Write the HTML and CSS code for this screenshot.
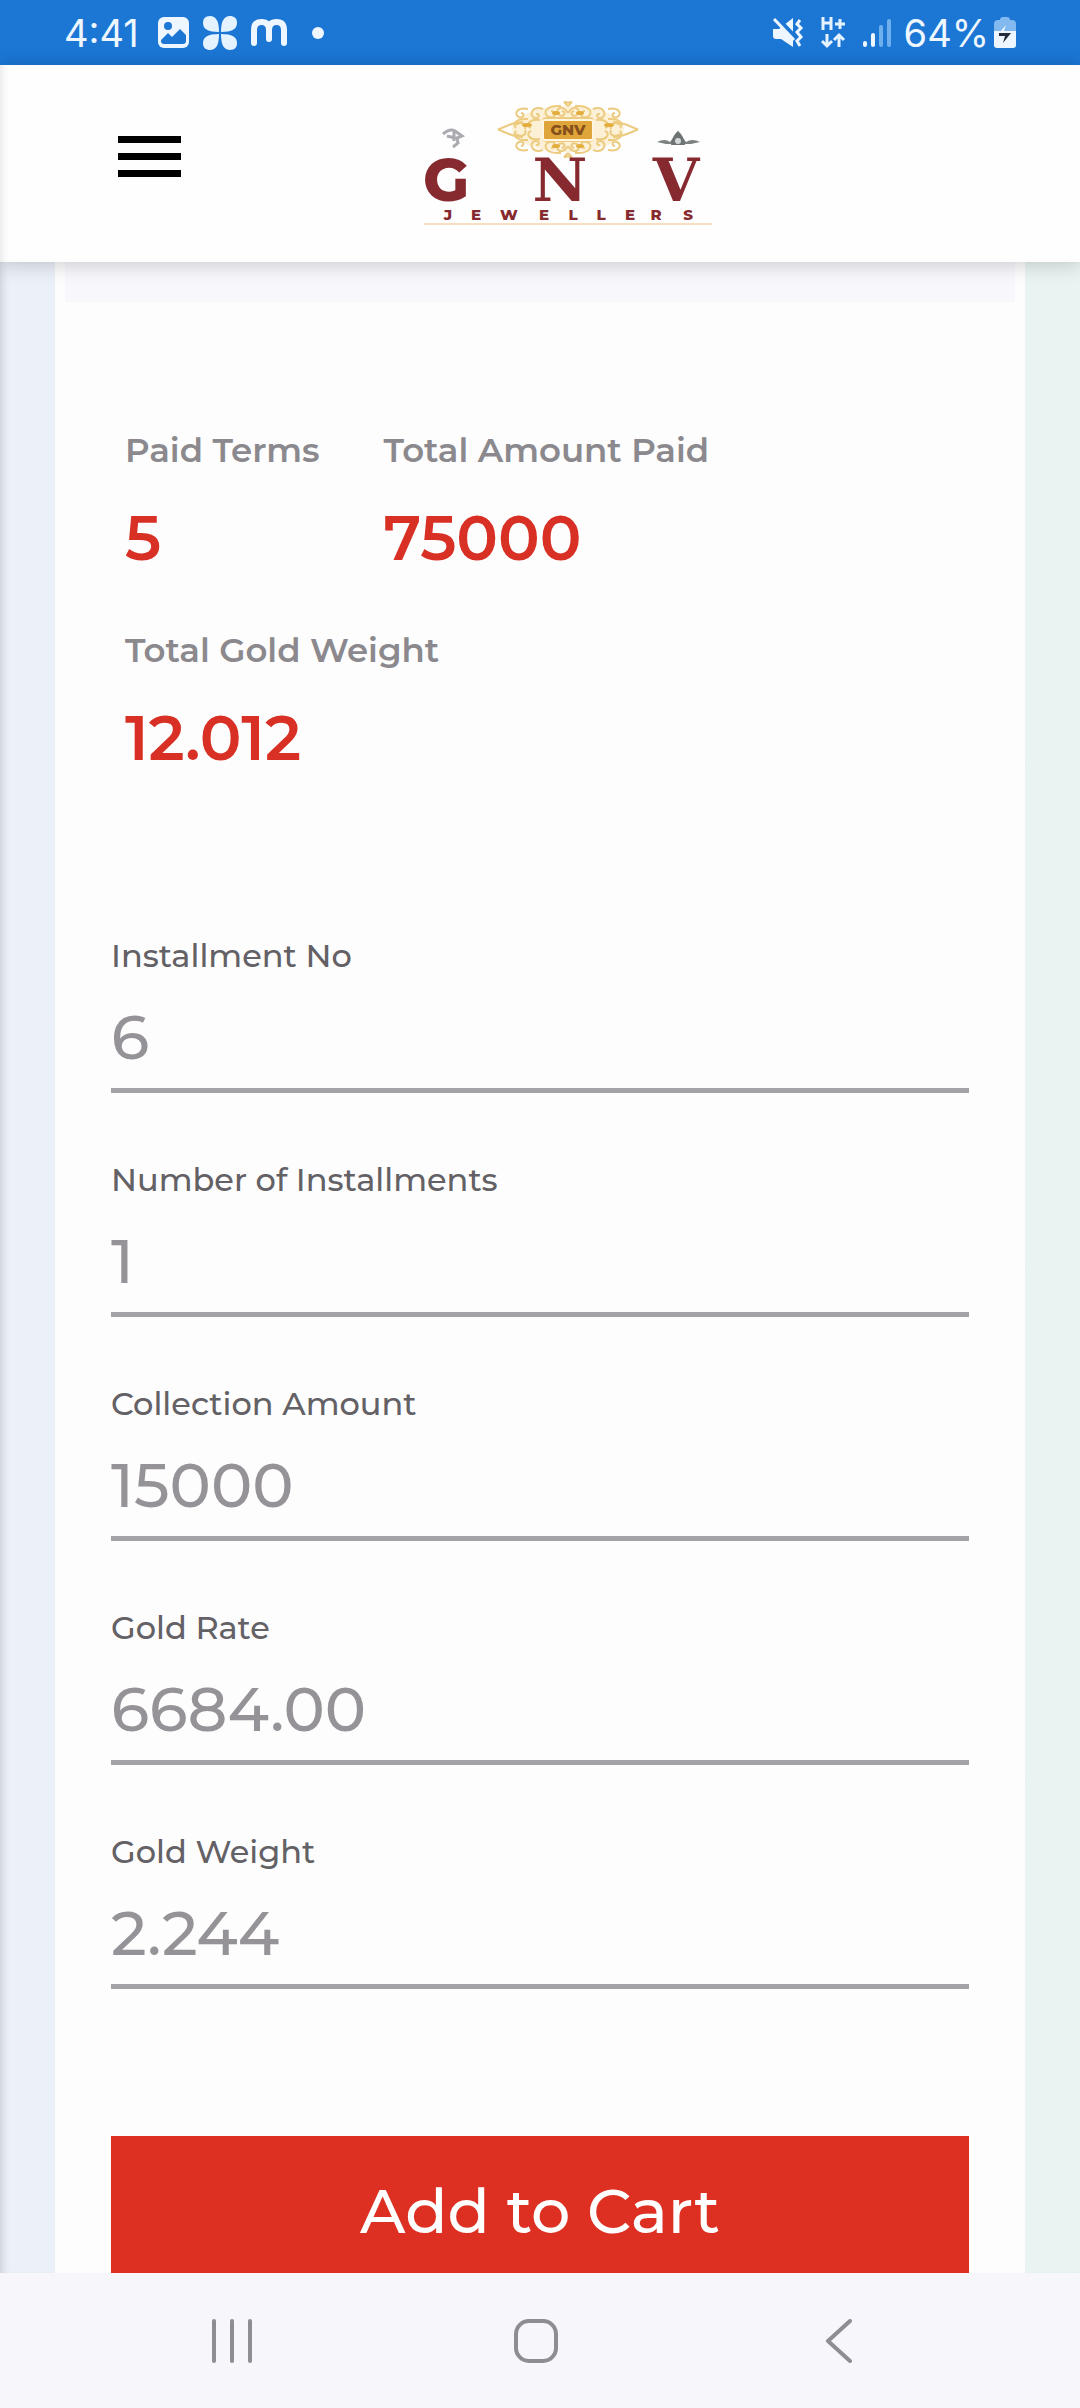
FILE: index.html
```html
<!DOCTYPE html>
<html lang="en">
<head>
    <meta charset="UTF-8">
    <meta name="viewport" content="width=device-width, initial-scale=1.0">
    <title>GNV Jewellers</title>
    <link rel="stylesheet" href="styles.css">
</head>
<body>
    <div class="status-bar">
        <div class="status-left">
            <span class="clock">4:41</span>
            <svg width="31" height="31" viewBox="0 0 31 31">
                <rect width="31" height="31" rx="6" fill="#eef7ff"/>
                <circle cx="10" cy="9" r="4" fill="#1b76d4"/>
                <path d="M3 23 L10 16 L14 20 L22 12 L28 18 V24 Q28 27 25 27 H6 Q3 27 3 24 Z" fill="#1b76d4"/>
            </svg>
            <svg width="36" height="36" viewBox="0 0 36 36" fill="#e4f3ff">
                <path id="petal" d="M17 17 C17 6 14 1 8 1 C3 1 1 4 1 8 C1 14 6 17 17 17 Z"/>
                <use href="#petal" transform="rotate(90 18 18)"/>
                <use href="#petal" transform="rotate(180 18 18)"/>
                <use href="#petal" transform="rotate(270 18 18)"/>
            </svg>
            <svg width="36" height="27" viewBox="0 0 36 27" fill="none" stroke="#eef7ff" stroke-width="6" stroke-linecap="round">
                <path d="M3 24 V11 Q3 3 10.500 3 Q18 3 18 11 V20 M18 11 Q18 3 25.500 3 Q33 3 33 11 V24"/>
            </svg>
            <span class="dot"></span>
        </div>
        <div class="status-right">
            <svg width="32" height="30" viewBox="0 0 32 30">
                <path d="M1 11 H7 L21 0 V29 L9 21 H4 Q1 21 1 18 Z" fill="#eef7ff"/>
                <path d="M4 0 L24 21" stroke="#1b76d4" stroke-width="6"/>
                <path d="M2 1 L22 22" stroke="#eef7ff" stroke-width="3"/>
                <path d="M28 2 L25 6 L29 10 L25 14 L29 19 L25 23 L28 28" fill="none" stroke="#eef7ff" stroke-width="3"/>
            </svg>
            <svg width="25" height="33" viewBox="0 0 25 33" fill="none" stroke="#e4f3ff" stroke-width="3">
                <path d="M2 1 V14 M10 1 V14 M2 7 H10 M14 8 H24 M19 3 V13"/>
                <path d="M6 18 V30 M1 25 L6 30 L11 25 M18 31 V19 M13 24 L18 19 L23 24"/>
            </svg>
            <svg class="signal" width="28" height="30" viewBox="0 0 28 30" stroke-width="4" stroke-linecap="round">
                <path d="M2 25 V27 M10 17 V27" stroke="#eef7ff"/>
                <path d="M18 9 V27 M26 3 V27" stroke="#6eb0ee"/>
            </svg>
            <span class="battery-level">64%</span>
            <svg class="battery" width="22" height="32" viewBox="0 0 22 32">
                <path d="M6 3 Q6 0 9 0 H13 Q16 0 16 3 H18 Q22 3 22 7 V15 H0 V7 Q0 3 4 3 Z" fill="#82b9ee"/>
                <path d="M0 14 H22 V28 Q22 31 19 31 H3 Q0 31 0 28 Z" fill="#eef7ff"/>
                <path d="M12 8 L6 15 H11 L10 14 Z" fill="#eef7ff"/>
                <path d="M5 16 H17 L9 26 L11 19 H5 Z" fill="#222b3c"/>
            </svg>
        </div>
    </div>

    <header class="header">
        <button class="menu-btn" type="button" aria-label="Menu">
            <span></span>
            <span></span>
            <span></span>
        </button>
        <a class="logo" href="#" aria-label="GNV Jewellers">
            <svg width="370" height="170" viewBox="0 0 370 170">
                <defs>
                    <g id="scroll" fill="none" stroke="#eccb80" stroke-width="2">
                        <path d="M188 26 Q181 20 188 23 M188 33 C181 22 174 31 179 35 C184 38 187 32 182 31"/>
                        <path d="M181 26 C165 25 162 34 169 37 C176 39 177 31 171 31"/>
                        <path d="M163 29 C152 25 148 36 155 38 C160 39 160 33 156 34"/>
                        <path d="M148 29 C137 27 133 34 139 37 C144 39 145 33 141 33"/>
                        <path d="M160 40 C149 38 145 46 151 48 M148 39 C136 38 132 44 136 48"/>
                        <path d="M143 42 C133 42 127 46 118 49.500 M136 45 C141 41 147 44 145 49"/>
                        <path d="M163 49 V41 Q163 38 167 38 H188"/>
                    </g>
                </defs>
                <ellipse cx="188" cy="49" rx="56" ry="23" fill="#fcf1d6"/>
                <use href="#scroll"/>
                <use href="#scroll" transform="translate(376 0) scale(-1 1)"/>
                <use href="#scroll" transform="translate(0 99) scale(1 -1)"/>
                <use href="#scroll" transform="translate(376 99) scale(-1 -1)"/>
                <g fill="#e2ad3c">
                    <ellipse cx="176" cy="33" rx="4" ry="2"/>
                    <ellipse cx="200" cy="33" rx="4" ry="2"/>
                    <ellipse cx="176" cy="66" rx="4" ry="2"/>
                    <ellipse cx="200" cy="66" rx="4" ry="2"/>
                    <ellipse cx="147" cy="45" rx="5" ry="2"/>
                    <ellipse cx="229" cy="45" rx="5" ry="2"/>
                </g>
                <rect x="162" y="39" width="52" height="22" rx="3" fill="#fff6df"/>
                <rect x="164" y="41" width="48" height="18" rx="1" fill="#dfa43a"/>
                <text class="logo-badge" x="188" y="55">GNV</text>
                <path d="M63 54 Q70 48 75 51 L82 56 L77 58 L78 63 L73 67 M67 56 L75 58 M74 52 V61" fill="none" stroke="#aaaab0" stroke-width="3"/>
                <path d="M277 62 Q285 58 290 62 L298 51 L306 62 Q312 58 320 62 L311 64 H286 Z" fill="#7c8282"/>
                <path d="M291 65 Q292 56 298 51 Q304 56 305 65 Z" fill="#6e7474"/>
                <circle cx="298" cy="61" r="3" fill="#d6d8d8"/>
                <text class="logo-name" x="66 180 296" y="121"><tspan class="logo-name-sans">G</tspan>NV</text>
                <text class="logo-sub" x="68 96 129 164 193 221 250 276 308" y="140">JEWELLERS</text>
                <path d="M44 144 H332" stroke="#f7dfc0" stroke-width="2"/>
            </svg>
        </a>
    </header>

    <main class="page">
        <div class="card">
            <div class="card-strip"></div>

            <dl class="summary">
                <div class="summary-item">
                    <dt>Paid Terms</dt>
                    <dd>5</dd>
                </div>
                <div class="summary-item">
                    <dt>Total Amount Paid</dt>
                    <dd>75000</dd>
                </div>
                <div class="summary-item">
                    <dt>Total Gold Weight</dt>
                    <dd>12.012</dd>
                </div>
            </dl>

            <form class="payment-form">
                <div class="field">
                    <label for="installmentNo">Installment No</label>
                    <input type="text" id="installmentNo" value="6" readonly>
                </div>
                <div class="field">
                    <label for="installments">Number of Installments</label>
                    <input type="text" id="installments" value="1" readonly>
                </div>
                <div class="field">
                    <label for="amount">Collection Amount</label>
                    <input type="text" id="amount" value="15000" readonly>
                </div>
                <div class="field">
                    <label for="goldRate">Gold Rate</label>
                    <input type="text" id="goldRate" value="6684.00" readonly>
                </div>
                <div class="field">
                    <label for="goldWeight">Gold Weight</label>
                    <input type="text" id="goldWeight" value="2.244" readonly>
                </div>
                <button class="cart-btn" type="button">Add to Cart</button>
            </form>
        </div>
    </main>

    <nav class="nav-bar">
        <button type="button" aria-label="Recent apps">
            <svg width="44" height="44" viewBox="0 0 44 44">
                <path d="M3 2 V42 M21 2 V42 M39 2 V42"/>
            </svg>
        </button>
        <button type="button" aria-label="Home">
            <svg width="44" height="44" viewBox="0 0 44 44">
                <rect x="2" y="2" width="40" height="40" rx="13"/>
            </svg>
        </button>
        <button type="button" aria-label="Back">
            <svg width="44" height="44" viewBox="0 0 44 44">
                <path d="M33 2 L11 22 L33 42"/>
            </svg>
        </button>
    </nav>
</body>
</html>
```

FILE: styles.css
```css
* {
    margin: 0;
    padding: 0;
    box-sizing: border-box;
}

body {
    font-family: Montserrat, Inter, sans-serif;
    background: #fdfdfd;
    height: 100vh;
    display: flex;
    flex-direction: column;
    overflow: hidden;
}

button {
    border: none;
    background: none;
    font-family: inherit;
}

svg {
    display: block;
}

/* status bar */
.status-bar {
    flex: none;
    height: 65px;
    padding: 0 64px;
    display: flex;
    align-items: center;
    justify-content: space-between;
    background: #1b76d4;
    color: #eef7ff;
    font-family: Inter, sans-serif;
    font-size: 38px;
}

.status-left,
.status-right {
    display: flex;
    align-items: center;
}

.status-left {
    gap: 13px;
}

.status-right {
    gap: 17px;
}

.clock {
    margin-right: 6px;
}

.signal {
    margin-right: -4px;
}

.battery {
    margin-left: -12px;
}

.dot {
    width: 12px;
    height: 12px;
    margin-left: 12px;
    border-radius: 50%;
    background: #eef7ff;
}

/* header */
.header {
    flex: none;
    position: relative;
    z-index: 2;
    height: 197px;
    padding: 15px 118px 0;
    display: flex;
    align-items: flex-start;
    gap: 199px;
    background: #fefefe;
    box-shadow: 0 2px 20px rgba(0, 0, 0, 0.2), inset 8px 0 8px -6px rgba(0, 0, 0, 0.1);
}

.menu-btn {
    width: 63px;
    margin-top: 56px;
    display: flex;
    flex-direction: column;
    gap: 10px;
}

.menu-btn span {
    height: 7px;
    background: #000;
}

.logo text {
    text-anchor: middle;
    fill: #862a30;
}

.logo .logo-name {
    font: bold 60px "DejaVu Serif", serif;
}

.logo .logo-name-sans {
    font-family: Montserrat, Inter, sans-serif;
    font-weight: 800;
}

.logo .logo-sub {
    font: 800 15px Montserrat, Inter, sans-serif;
}

.logo .logo-badge {
    font: 800 15px Montserrat, Inter, sans-serif;
    fill: #85501c;
}

/* content */
.page {
    flex: 1;
    min-height: 0;
    overflow: hidden;
    padding: 0 55px;
    background: linear-gradient(to right, #ebf0f9, #e9f4f2);
    box-shadow: inset 8px 0 8px -6px rgba(0, 0, 0, 0.15);
}

.card {
    padding: 0 10px;
    background: #fdfdfd;
}

.card-strip {
    height: 40px;
    background: #f8f7fb;
}

.summary {
    display: flex;
    flex-wrap: wrap;
    gap: 52px 64px;
    padding: 128px 60px 0;
}

.summary-item {
    min-width: 194px;
}

.summary dt {
    font-size: 34px;
    font-weight: 600;
    line-height: 40px;
    color: #8b898d;
}

.summary dd {
    margin-top: 28px;
    font-size: 62px;
    font-weight: 600;
    line-height: 80px;
    color: #d93025;
}

.payment-form {
    margin-top: 158px;
    padding: 0 46px;
    display: flex;
    flex-direction: column;
    gap: 66px;
}

.field label {
    display: block;
    font-size: 32px;
    font-weight: 500;
    line-height: 40px;
    color: #636165;
}

.field input {
    display: block;
    width: 100%;
    height: 103px;
    margin-top: 14px;
    padding-bottom: 4px;
    border: none;
    border-bottom: 5px solid #a3a2a6;
    outline: none;
    background: transparent;
    font-family: inherit;
    font-size: 62px;
    font-weight: 500;
    color: #959397;
}

.field + .field {
    margin-top: 1px;
}

.cart-btn {
    height: 150px;
    margin-top: 81px;
    background: #dd3022;
    color: #fff;
    font-size: 62px;
    font-weight: 500;
}

/* bottom navigation */
.nav-bar {
    flex: none;
    position: relative;
    height: 135px;
    padding: 0 90px 0 82px;
    display: flex;
    align-items: center;
    background: #f7f6fa;
}

.nav-bar button {
    flex: 1;
    display: flex;
    justify-content: center;
}

.nav-bar svg {
    fill: none;
    stroke: #8e8d92;
    stroke-width: 4;
    stroke-linecap: round;
    stroke-linejoin: round;
}
```
